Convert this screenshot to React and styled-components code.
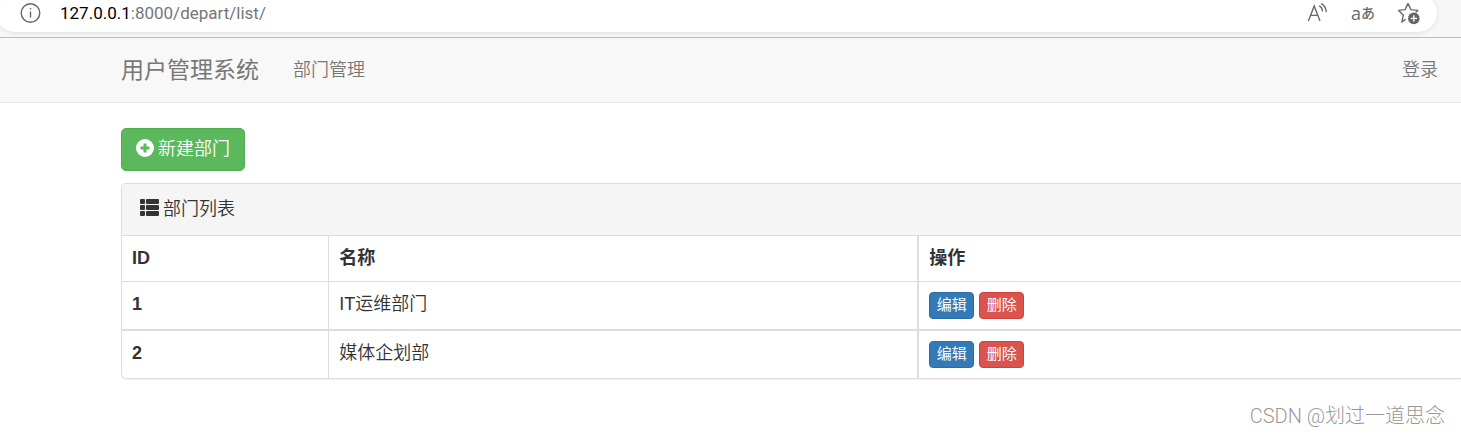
import React from 'react';
import styled, { createGlobalStyle } from 'styled-components';

const GlobalStyle = createGlobalStyle`
* {
	box-sizing: border-box;
}

body {
	margin: 0;
	background-color: #fff;
	color: #333;
	font-family: "Liberation Sans", "Noto Sans CJK SC", sans-serif;
	font-size: 18px;
	font-weight: 350;
	line-height: 26px;
	overflow-x: hidden;
}
`

const departs = [
  { id: 1, title: 'IT运维部门' },
  { id: 2, title: '媒体企划部' },
]

function InfoIcon() {
  return (
    <svg width="22" height="22" viewBox="0 0 22 22" fill="none" stroke="#666" strokeWidth="1.4">
      <circle cx="10.5" cy="11" r="9.3" />
      <path d="M10.5 9.5v6" />
      <circle cx="10.5" cy="6.8" r="0.5" fill="#666" strokeWidth="0.8" />
    </svg>
  )
}

function ReadAloudIcon() {
  return (
    <svg width="22" height="22" viewBox="0 0 22 22" fill="none" stroke="#6b6b6b" strokeWidth="1.4" strokeLinecap="round">
      <path d="M1.6 18.5L7.2 4L12.8 18.5M3.6 13.4h7.2" />
      <path d="M12.6 4.1c1.7 1 2.7 2.6 2.8 4.8M14.6 1.8c2.8 1.6 4.5 4.4 4.6 7.8" />
    </svg>
  )
}

function FavoriteIcon() {
  return (
    <svg width="24" height="24" viewBox="0 0 24 24" fill="none">
      <path
        d="M8.2 18.6L4.9 21l1.4-6.9L1.6 9.4l6.5-.8L11 2.4l2.9 6.2 6.9.8-1.7 1.7"
        stroke="#6b6b6b" strokeWidth="1.4" strokeLinejoin="round" strokeLinecap="round"
      />
      <circle cx="16.8" cy="17.4" r="5.8" fill="#666" />
      <path d="M16.8 14.2v6.4M13.6 17.4h6.4" stroke="#fff" strokeWidth="1.4" />
    </svg>
  )
}

function PlusIcon() {
  return (
    <svg width="18" height="18" viewBox="0 0 18 18">
      <circle cx="9" cy="9" r="9" fill="#fff" />
      <path d="M9 4.5v9M4.5 9h9" stroke="#5cb85c" strokeWidth="3" />
    </svg>
  )
}

function ListIcon() {
  return (
    <svg width="19" height="18" viewBox="0 0 19 18" fill="#333">
      <rect x="0" y="0" width="5" height="5" rx="1" />
      <rect x="0" y="6" width="5" height="5" rx="1" />
      <rect x="0" y="12" width="5" height="5" rx="1" />
      <rect x="6" y="0" width="13" height="5" rx="1" />
      <rect x="6" y="6" width="13" height="5" rx="1" />
      <rect x="6" y="12" width="13" height="5" rx="1" />
    </svg>
  )
}

function App() {
  return (
    <>
      <GlobalStyle />
      <Browser>
        <AddressBar>
          <InfoIcon />
          <Url><b>127.0.0.1</b>:8000/depart/list/</Url>
          <Tools>
            <ToolButton aria-label="Read aloud"><ReadAloudIcon /></ToolButton>
            <ToolButton aria-label="Translate">a<small>あ</small></ToolButton>
            <ToolButton aria-label="Favorite"><FavoriteIcon /></ToolButton>
          </Tools>
        </AddressBar>
      </Browser>
      <Navbar>
        <Brand href="#">用户管理系统</Brand>
        <NavLink href="#">部门管理</NavLink>
        <NavLink href="#" $right>登录</NavLink>
      </Navbar>
      <Container>
        <AddButton><PlusIcon />新建部门</AddButton>
        <Panel>
          <PanelHeading><ListIcon />部门列表</PanelHeading>
          <Table>
            <thead>
              <tr>
                <Th $width="15.4%">ID</Th>
                <Th $width="44%">名称</Th>
                <Th>操作</Th>
              </tr>
            </thead>
            <tbody>
              {departs.map((depart) => (
                <tr key={depart.id}>
                  <Th scope="row">{depart.id}</Th>
                  <Td>{depart.title}</Td>
                  <Td>
                    <Actions>
                      <SmallButton>编辑</SmallButton>
                      <SmallButton $danger>删除</SmallButton>
                    </Actions>
                  </Td>
                </tr>
              ))}
            </tbody>
          </Table>
        </Panel>
      </Container>
      <Watermark>CSDN @划过一道思念</Watermark>
    </>
  )
}

export default App

const Browser = styled.div`
	background-color: #f7f7f7;
	border-bottom: 1px solid #bbb;
	padding: 0 24px 5px 0;
	overflow: hidden;
`

const AddressBar = styled.div`
	display: flex;
	align-items: center;
	height: 38px;
	margin: -6px 0 0 -4px;
	padding: 0 16px 0 24px;
	background-color: #fff;
	border-radius: 19px;
	box-shadow: 0 1px 4px rgba(0, 0, 0, 0.1);
`

const Url = styled.span`
	margin-left: 18px;
	color: #767676;
	font-family: Roboto, sans-serif;
	font-size: 17px;
	font-weight: 400;

	b {
		color: #000;
		font-weight: 400;
	}
`

const Tools = styled.div`
	display: flex;
	align-items: center;
	gap: 22px;
	margin-left: auto;
`

const ToolButton = styled.button`
	display: flex;
	align-items: center;
	padding: 0;
	border: 0;
	background: none;
	color: #6b6b6b;
	font-family: "Open Sans", "Noto Sans CJK JP", sans-serif;
	font-size: 18px;
	line-height: 20px;

	small {
		font-size: 14px;
		font-weight: 500;
	}
`

const Navbar = styled.nav`
	display: flex;
	align-items: center;
	height: 65px;
	padding: 0 23px 0 121px;
	background-color: #f8f8f8;
	border-bottom: 1px solid #e7e7e7;
`

const Brand = styled.a`
	margin-right: 34px;
	color: #777;
	font-size: 23px;
	font-weight: 400;
	text-decoration: none;
`

const NavLink = styled.a`
	margin-left: ${(props) => (props.$right ? 'auto' : '0')};
	color: #777;
	text-decoration: none;
`

const Container = styled.main`
	padding: 25px 0 0 121px;
`

const AddButton = styled.button`
	display: flex;
	align-items: center;
	gap: 4px;
	padding: 7px 14px 8px;
	border: 1px solid #4cae4c;
	border-radius: 5px;
	background-color: #5cb85c;
	color: #fff;
	font: inherit;

	svg {
		margin-bottom: 3px;
	}
`

const Panel = styled.section`
	margin-top: 12px;
	border: 1px solid #ddd;
	border-right: 0;
	border-radius: 5px 0 0 5px;
	box-shadow: 0 1px 1px rgba(0, 0, 0, 0.05);
	overflow: hidden;
`

const PanelHeading = styled.div`
	display: flex;
	align-items: center;
	gap: 4px;
	height: 51px;
	padding: 0 18px 2px;
	background-color: #f5f5f5;

	svg {
		margin-bottom: 2px;
	}
`

const Table = styled.table`
	width: 100%;
	table-layout: fixed;
	border-spacing: 0;

	tbody tr + tr > * {
		border-top-width: 2px;
	}
`

const Td = styled.td`
	padding: 10px;
	border-top: 1px solid #ddd;
	border-left: 1px solid #ddd;
	line-height: 25px;
	vertical-align: top;

	&:first-child {
		border-left: 0;
	}

	&:last-child {
		border-left-width: 2px;
	}
`

const Th = styled(Td).attrs({ as: 'th' })`
	width: ${(props) => props.$width || 'auto'};
	font-weight: 700;
	text-align: left;
`

const Actions = styled.div`
	display: flex;
	gap: 5px;
`

const SmallButton = styled.button`
	min-width: 45px;
	padding: 0 6px 2px;
	border: 1px solid ${(props) => (props.$danger ? '#d43f3a' : '#2e6da4')};
	border-radius: 4px;
	background-color: ${(props) => (props.$danger ? '#d9534f' : '#337ab7')};
	color: #fff;
	font: inherit;
	font-size: 15px;
	font-weight: 400;
	line-height: 23px;
`

const Watermark = styled.footer`
	padding: 24px 16px 0 0;
	color: #999;
	font-family: Roboto, "Noto Sans CJK SC", sans-serif;
	font-size: 20px;
	font-weight: 300;
	text-align: right;
`
